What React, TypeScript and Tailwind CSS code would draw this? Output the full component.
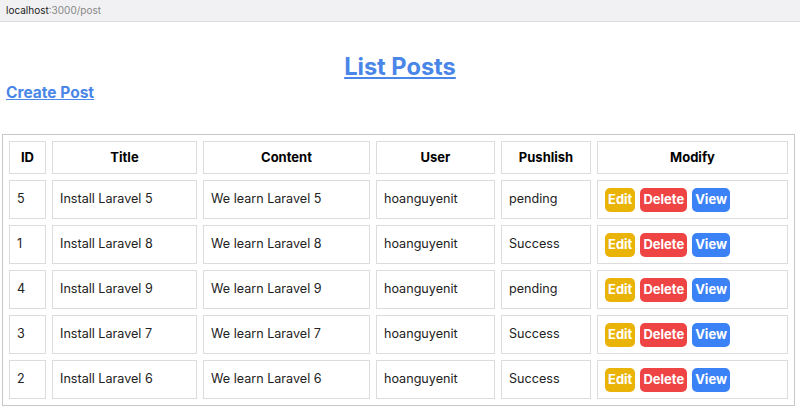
import React from 'react';

interface Post {
  id: number;
  title: string;
  content: string;
  user: string;
  status: string;
}

const posts: Post[] = [
  { id: 5, title: 'Install Laravel 5', content: 'We learn Laravel 5', user: 'hoanguyenit', status: 'pending' },
  { id: 1, title: 'Install Laravel 8', content: 'We learn Laravel 8', user: 'hoanguyenit', status: 'Success' },
  { id: 4, title: 'Install Laravel 9', content: 'We learn Laravel 9', user: 'hoanguyenit', status: 'pending' },
  { id: 3, title: 'Install Laravel 7', content: 'We learn Laravel 7', user: 'hoanguyenit', status: 'Success' },
  { id: 2, title: 'Install Laravel 6', content: 'We learn Laravel 6', user: 'hoanguyenit', status: 'Success' },
];

const th = 'border border-[#dcdcdc] h-[33px] text-center font-bold text-[13px] text-black';
const td = 'border border-[#dcdcdc] h-[39px] px-[7px] text-[12.6px] text-[#222]';
const btn = 'h-[24px] px-[3px] rounded-[5px] text-white font-bold text-[13px]';

export default function App() {
  return (
    <div className="w-[800px] h-[415px] bg-white overflow-hidden font-['Inter',sans-serif]">
      {/* Browser address bar */}
      <div className="h-[22px] bg-[#f1f1f3] border-b border-[#dadada] flex items-center px-[6px] text-[10px]">
        <span className="text-[#222]">localhost</span>
        <span className="text-[#888]">:3000/post</span>
      </div>

      {/* Headings */}
      <div className="pt-[31px]">
        <h1 className="text-center text-[23.6px] font-bold leading-[28px]">
          <a href="#" className="text-[#4a86e8] underline">List Posts</a>
        </h1>
        <h2 className="px-[6px] text-[15.5px] font-bold leading-[20px] mt-[2px]">
          <a href="#" className="text-[#4a86e8] underline">Create Post</a>
        </h2>
      </div>

      {/* Table */}
      <div className="pt-[31px] pl-[2px]">
        <table className="border-separate border-spacing-[6px] border border-[#c8c8c8] w-[792px] table-fixed">
          <colgroup>
            <col className="w-[37px]" />
            <col className="w-[145px]" />
            <col className="w-[167px]" />
            <col className="w-[119px]" />
            <col className="w-[90px]" />
            <col className="w-[191px]" />
          </colgroup>
          <thead>
            <tr>
              <th className={th}>ID</th>
              <th className={th}>Title</th>
              <th className={th}>Content</th>
              <th className={th}>User</th>
              <th className={th}>Pushlish</th>
              <th className={th}>Modify</th>
            </tr>
          </thead>
          <tbody>
            {posts.map((p) => (
              <tr key={p.id}>
                <td className={td}>{p.id}</td>
                <td className={td}>{p.title}</td>
                <td className={td}>{p.content}</td>
                <td className={td}>{p.user}</td>
                <td className={td}>{p.status}</td>
                <td className={td}>
                  <div className="flex gap-[5px]">
                    <button className={`${btn} bg-[#eab308]`}>Edit</button>
                    <button className={`${btn} bg-[#ef4444]`}>Delete</button>
                    <button className={`${btn} bg-[#3b82f6]`}>View</button>
                  </div>
                </td>
              </tr>
            ))}
          </tbody>
        </table>
      </div>
    </div>
  );
}
